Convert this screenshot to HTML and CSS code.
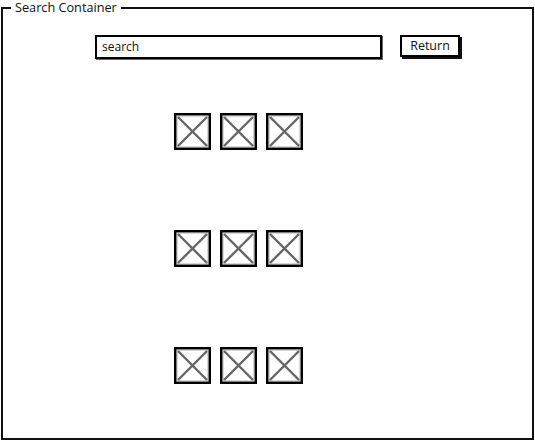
FILE: index.html
```html
<!DOCTYPE html>
<html>
<head>
<meta charset="utf-8">
<link rel="stylesheet" href="styles.css">
</head>
<body>
<fieldset class="container">
  <legend class="title">Search Container</legend>
  <div class="search-row">
    <div class="search-input">search</div>
    <div class="return-btn">Return</div>
  </div>
  <div class="grid">
    <div class="row">
      <svg class="ph" viewBox="0 0 37 37" width="37" height="37"><rect x="3" y="3" width="31" height="31" fill="#fff" stroke="#b0b0b0" stroke-width="1"/><line x1="4" y1="4" x2="33" y2="33" stroke="#666" stroke-width="2.4"/><line x1="33" y1="4" x2="4" y2="33" stroke="#666" stroke-width="2.4"/><rect x="1.2" y="1.2" width="34.6" height="34.6" fill="none" stroke="#000" stroke-width="2.4"/></svg>
      <svg class="ph" viewBox="0 0 37 37" width="37" height="37"><rect x="3" y="3" width="31" height="31" fill="#fff" stroke="#b0b0b0" stroke-width="1"/><line x1="4" y1="4" x2="33" y2="33" stroke="#666" stroke-width="2.4"/><line x1="33" y1="4" x2="4" y2="33" stroke="#666" stroke-width="2.4"/><rect x="1.2" y="1.2" width="34.6" height="34.6" fill="none" stroke="#000" stroke-width="2.4"/></svg>
      <svg class="ph" viewBox="0 0 37 37" width="37" height="37"><rect x="3" y="3" width="31" height="31" fill="#fff" stroke="#b0b0b0" stroke-width="1"/><line x1="4" y1="4" x2="33" y2="33" stroke="#666" stroke-width="2.4"/><line x1="33" y1="4" x2="4" y2="33" stroke="#666" stroke-width="2.4"/><rect x="1.2" y="1.2" width="34.6" height="34.6" fill="none" stroke="#000" stroke-width="2.4"/></svg>
    </div>
    <div class="row">
      <svg class="ph" viewBox="0 0 37 37" width="37" height="37"><rect x="3" y="3" width="31" height="31" fill="#fff" stroke="#b0b0b0" stroke-width="1"/><line x1="4" y1="4" x2="33" y2="33" stroke="#666" stroke-width="2.4"/><line x1="33" y1="4" x2="4" y2="33" stroke="#666" stroke-width="2.4"/><rect x="1.2" y="1.2" width="34.6" height="34.6" fill="none" stroke="#000" stroke-width="2.4"/></svg>
      <svg class="ph" viewBox="0 0 37 37" width="37" height="37"><rect x="3" y="3" width="31" height="31" fill="#fff" stroke="#b0b0b0" stroke-width="1"/><line x1="4" y1="4" x2="33" y2="33" stroke="#666" stroke-width="2.4"/><line x1="33" y1="4" x2="4" y2="33" stroke="#666" stroke-width="2.4"/><rect x="1.2" y="1.2" width="34.6" height="34.6" fill="none" stroke="#000" stroke-width="2.4"/></svg>
      <svg class="ph" viewBox="0 0 37 37" width="37" height="37"><rect x="3" y="3" width="31" height="31" fill="#fff" stroke="#b0b0b0" stroke-width="1"/><line x1="4" y1="4" x2="33" y2="33" stroke="#666" stroke-width="2.4"/><line x1="33" y1="4" x2="4" y2="33" stroke="#666" stroke-width="2.4"/><rect x="1.2" y="1.2" width="34.6" height="34.6" fill="none" stroke="#000" stroke-width="2.4"/></svg>
    </div>
    <div class="row">
      <svg class="ph" viewBox="0 0 37 37" width="37" height="37"><rect x="3" y="3" width="31" height="31" fill="#fff" stroke="#b0b0b0" stroke-width="1"/><line x1="4" y1="4" x2="33" y2="33" stroke="#666" stroke-width="2.4"/><line x1="33" y1="4" x2="4" y2="33" stroke="#666" stroke-width="2.4"/><rect x="1.2" y="1.2" width="34.6" height="34.6" fill="none" stroke="#000" stroke-width="2.4"/></svg>
      <svg class="ph" viewBox="0 0 37 37" width="37" height="37"><rect x="3" y="3" width="31" height="31" fill="#fff" stroke="#b0b0b0" stroke-width="1"/><line x1="4" y1="4" x2="33" y2="33" stroke="#666" stroke-width="2.4"/><line x1="33" y1="4" x2="4" y2="33" stroke="#666" stroke-width="2.4"/><rect x="1.2" y="1.2" width="34.6" height="34.6" fill="none" stroke="#000" stroke-width="2.4"/></svg>
      <svg class="ph" viewBox="0 0 37 37" width="37" height="37"><rect x="3" y="3" width="31" height="31" fill="#fff" stroke="#b0b0b0" stroke-width="1"/><line x1="4" y1="4" x2="33" y2="33" stroke="#666" stroke-width="2.4"/><line x1="33" y1="4" x2="4" y2="33" stroke="#666" stroke-width="2.4"/><rect x="1.2" y="1.2" width="34.6" height="34.6" fill="none" stroke="#000" stroke-width="2.4"/></svg>
    </div>
  </div>
</fieldset>
</body>
</html>
```

FILE: styles.css
```css
html, body {
  margin: 0;
  padding: 0;
  background: #fff;
}
body {
  font-family: "Open Sans", "Noto Sans", sans-serif;
  font-size: 12px;
  color: #111;
  width: 535px;
  height: 441px;
  overflow: hidden;
}
.container {
  box-sizing: border-box;
  margin: 0 0 0 1px;
  width: 533px;
  height: 440px;
  border: 2px solid #111;
  padding: 0;
  min-width: 0;
}
.title {
  margin-left: 8px;
  padding: 0 4px;
  line-height: 15px;
  height: 15px;
  font-size: 12.7px;
  font-weight: 500;
}
.search-row {
  display: flex;
  align-items: flex-start;
  gap: 18px;
  margin-top: 20px;
  padding-left: 92px;
}
.search-input {
  box-sizing: border-box;
  width: 287px;
  height: 24px;
  border: 2px solid #000;
  box-shadow: 1px 1px 0 #666;
  padding-left: 5px;
  line-height: 20px;
  font-weight: 500;
}
.return-btn {
  box-sizing: border-box;
  width: 60px;
  height: 22px;
  border: 2px solid #000;
  box-shadow: 2px 2px 0 #111;
  text-align: center;
  line-height: 18px;
  font-size: 12.5px;
  font-weight: 500;
}
.grid {
  display: flex;
  flex-direction: column;
  gap: 80px;
  margin-top: 54px;
  padding-left: 171px;
}
.row {
  display: flex;
  gap: 9px;
}
.ph {
  display: block;
}
```
